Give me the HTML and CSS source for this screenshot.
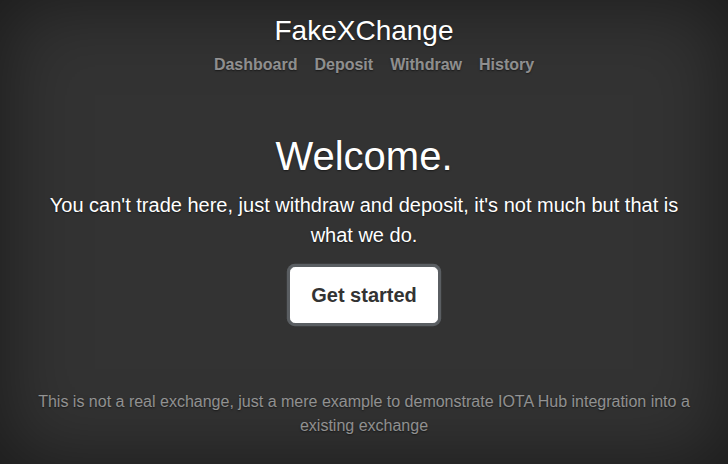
FILE: index.html
```html
<!DOCTYPE html>
<html lang="en">
<head>
<meta charset="utf-8">
<title>FakeXChange</title>
<link rel="stylesheet" href="styles.css">
</head>
<body>
<div class="cover">
  <header class="masthead">
    <h3 class="brand">FakeXChange</h3>
    <nav class="nav">
      <a class="nav-link" href="#">Dashboard</a>
      <a class="nav-link" href="#">Deposit</a>
      <a class="nav-link" href="#">Withdraw</a>
      <a class="nav-link" href="#">History</a>
    </nav>
  </header>
  <main class="inner">
    <h1 class="title">Welcome.</h1>
    <p class="lead">You can't trade here, just withdraw and deposit, it's not much but that is what we do.</p>
    <p class="lead"><a class="btn" href="#">Get started</a></p>
  </main>
  <footer class="mastfoot">
    <p>This is not a real exchange, just a mere example to demonstrate IOTA Hub integration into a existing exchange</p>
  </footer>
</div>
</body>
</html>
```

FILE: styles.css
```css
html, body {
  height: 100%;
  margin: 0;
}
body {
  background-color: #333;
  color: #fff;
  font-family: "Liberation Sans", Arial, sans-serif;
  font-size: 16px;
  line-height: 1.5;
  text-align: center;
  text-shadow: 0 0.05rem 0.1rem rgba(0, 0, 0, 0.5);
  box-shadow: inset 0 0 5rem rgba(0, 0, 0, 0.5);
  box-sizing: border-box;
}
*, *::before, *::after { box-sizing: border-box; }
.cover {
  display: flex;
  flex-direction: column;
  max-width: 42em;
  height: 100%;
  margin: 0 auto;
  padding: 14px 0 26px;
}
.masthead { margin-bottom: 0; }
.brand {
  margin: 0;
  font-size: 28px;
  font-weight: 400;
  line-height: 1.2;
}
.nav {
  display: flex;
  justify-content: center;
  padding-left: 20px;
}
.nav-link {
  padding: 5px 0 0;
  font-weight: 700;
  color: rgba(255, 255, 255, 0.5);
  background-color: transparent;
  text-decoration: none;
}
.nav-link + .nav-link { margin-left: 17px; }
.inner {
  margin: auto 0;
  padding-top: 30px;
}
.title {
  margin: 0 0 10px;
  font-size: 40px;
  font-weight: 400;
  line-height: 1.2;
}
.lead {
  margin: 0 0 17px;
  font-size: 20px;
  font-weight: 300;
}
.btn {
  display: inline-block;
  padding: 12px 20px;
  font-size: 20px;
  font-weight: 700;
  line-height: 1.5;
  color: #333;
  background-color: #fff;
  border: 0.05rem solid #fff;
  border-radius: 0.3rem;
  text-decoration: none;
  text-shadow: none;
  box-shadow: 0 0 0 0.2rem rgba(130, 138, 145, 0.5);
}
.mastfoot {
  margin-top: auto;
  color: rgba(255, 255, 255, 0.5);
}
.mastfoot p { margin: 0; }
```
